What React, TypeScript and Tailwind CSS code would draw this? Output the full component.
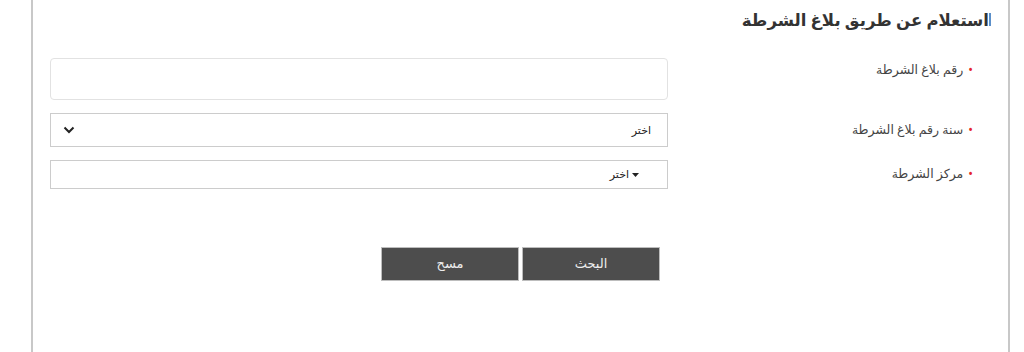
import React from "react";

export default function App() {
  return (
    <div
      className="w-[1024px] h-[352px] bg-white overflow-hidden"
      style={{ fontFamily: '"Noto Sans", "DejaVu Sans", sans-serif' }}
    >
      <div dir="rtl" className="ml-[31px] w-[979px] h-[352px] border-x-2 border-[#c8c8c8] bg-white">
        <div className="flex items-center h-[40px] pr-[17px]">
          <span className="w-[2px] h-[13px] bg-[#5b8fc9] mb-[1px]" />
          <h1 className="text-[16.5px] leading-[24px] font-bold text-[#333333]">
            استعلام عن طريق بلاغ الشرطة
          </h1>
        </div>

        <div className="mt-[18px] flex">
          <div className="w-[340px] pr-[35px] pt-[3px] text-[12.5px] text-[#444444] flex items-start">
            <span className="text-[#e5252a] ml-[5px]">•</span>
            <span>رقم بلاغ الشرطة</span>
          </div>
          <div className="w-[618px] h-[42px] border border-[#e2e2e2] rounded-[4px]" />
        </div>

        <div className="mt-[13px] flex">
          <div className="w-[340px] pr-[35px] text-[12.5px] text-[#444444] flex items-center">
            <span className="text-[#e5252a] ml-[5px]">•</span>
            <span>سنة رقم بلاغ الشرطة</span>
          </div>
          <div className="w-[618px] h-[34px] border border-[#cccccc] flex items-center justify-between pr-[16px] pl-[12px]">
            <span className="text-[11px] text-[#222222]">اختر</span>
            <svg width="12" height="8" viewBox="0 0 12 8">
              <path d="M1.5 1.5 L6 6 L10.5 1.5" fill="none" stroke="#222" strokeWidth="2" />
            </svg>
          </div>
        </div>

        <div className="mt-[13px] flex">
          <div className="w-[340px] pr-[35px] text-[12.5px] text-[#444444] flex items-center">
            <span className="text-[#e5252a] ml-[5px]">•</span>
            <span>مركز الشرطة</span>
          </div>
          <div className="w-[618px] h-[29px] border border-[#cccccc] flex items-center pr-[28px]">
            <svg width="7" height="4" viewBox="0 0 7 4" className="ml-[3px]">
              <path d="M0 0 L7 0 L3.5 4 Z" fill="#222" />
            </svg>
            <span className="text-[11px] text-[#222222]">اختر</span>
          </div>
        </div>

        <div className="mt-[58px] flex pr-[348px] gap-[3px]">
          <button className="w-[138px] h-[34px] bg-[#4d4d4d] border border-[#bdbdbd] text-[#eeeeee] text-[13px]">
            البحث
          </button>
          <button className="w-[138px] h-[34px] bg-[#4d4d4d] border border-[#bdbdbd] text-[#eeeeee] text-[13px]">
            مسح
          </button>
        </div>
      </div>
    </div>
  );
}
